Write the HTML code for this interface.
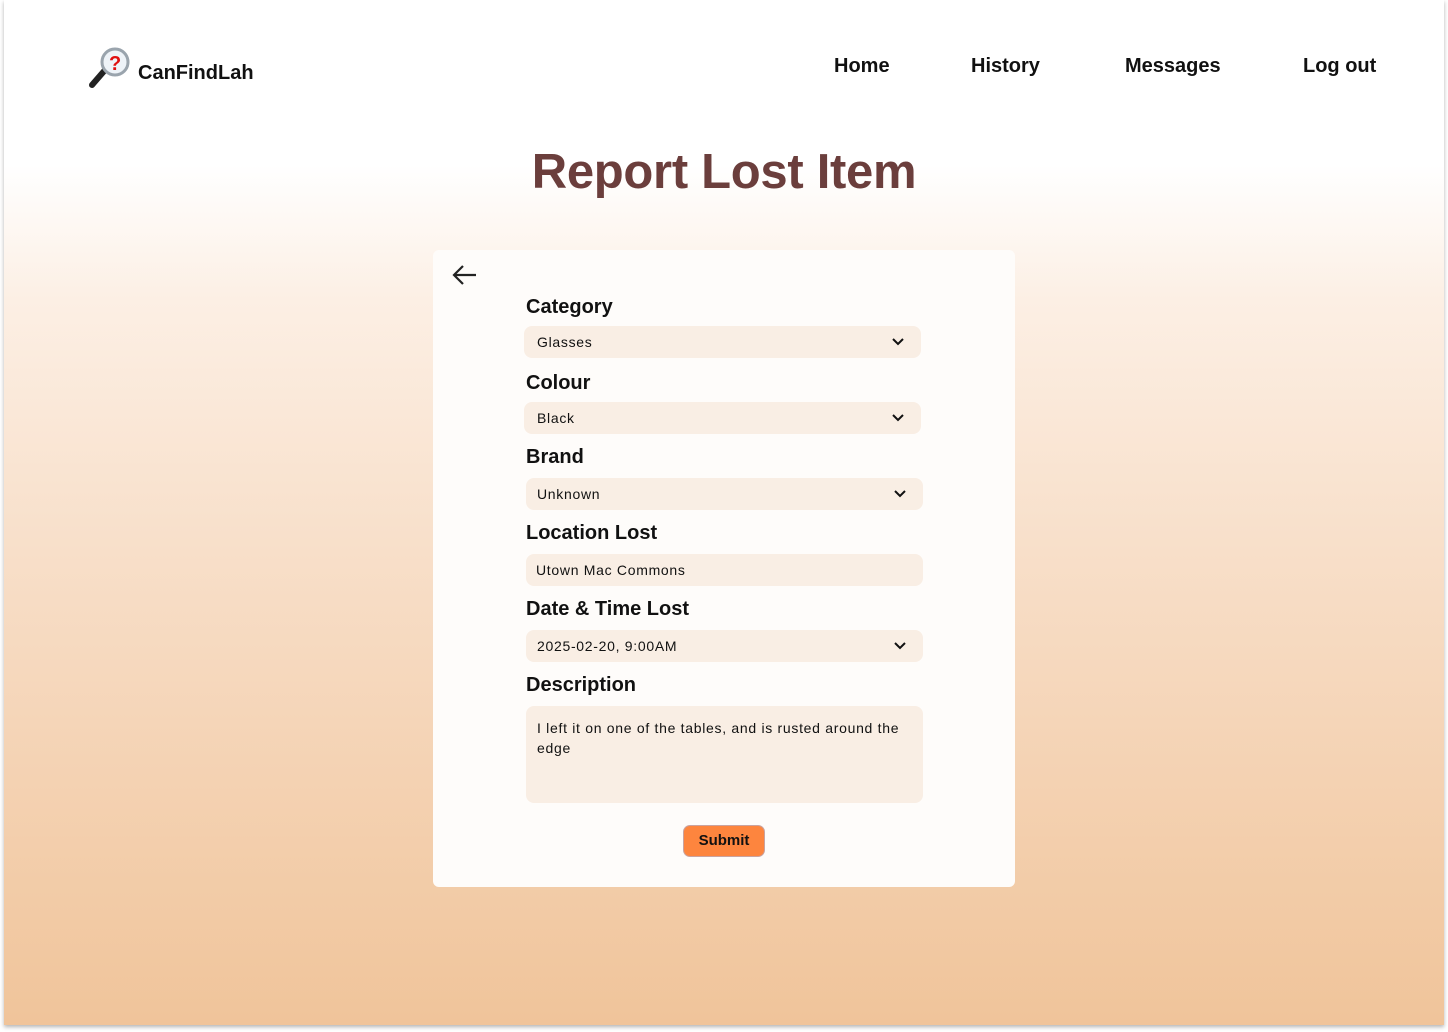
<!DOCTYPE html>
<html><head><style>
*{margin:0;padding:0;box-sizing:border-box}
body{width:1448px;height:1032px;background:#fff;position:relative;overflow:hidden;font-family:"Liberation Sans",sans-serif}
.frame{position:absolute;left:4px;top:0;width:1440px;height:1025px;background:linear-gradient(180deg,#fff 0px,#fff 165px,#fcefe4 300px,#f7dcc4 600px,#f0c49a 1025px);box-shadow:0 2px 4px rgba(0,0,0,.3)}
.nav{position:absolute;top:55px;font-size:20px;font-weight:bold;color:#111}
.logo{position:absolute;left:138px;top:62px;font-size:20px;font-weight:bold;color:#111}
h1{position:absolute;left:0;width:1448px;text-align:center;top:144px;font-size:49px;letter-spacing:-0.3px;color:#6b3e3c;font-weight:bold}
.card{position:absolute;left:433px;top:250px;width:582px;height:637px;background:#fefcfa;border-radius:6px}
.lbl{position:absolute;left:526px;font-size:20px;font-weight:bold;color:#111}
.fld{position:absolute;left:524px;width:397px;height:32px;background:#f9eee4;border-radius:8px;font-size:14px;color:#111;padding-left:13px;line-height:32px;letter-spacing:.7px}
.fld svg{position:absolute;right:16px;top:11px}
.btn{position:absolute;left:683px;top:825px;width:82px;height:32px;background:#fd853e;border:1px solid #c9a3a0;border-radius:7px;text-align:center;line-height:30px;font-size:15px;font-weight:bold;color:#111}
</style></head><body>
<div class="frame"></div>
<svg style="position:absolute;left:87px;top:46px" width="44" height="44" viewBox="0 0 44 44">
<line x1="18" y1="24" x2="5" y2="39" stroke="#222" stroke-width="6" stroke-linecap="round"/>
<circle cx="28" cy="16" r="13" fill="#eef3f8" stroke="#9aa4ad" stroke-width="3"/>
<text x="22" y="24" font-size="20" font-weight="bold" fill="#e01010" font-family="Liberation Sans">?</text>
</svg>
<div class="logo">CanFindLah</div>
<div class="nav" style="left:834px">Home</div>
<div class="nav" style="left:971px">History</div>
<div class="nav" style="left:1125px">Messages</div>
<div class="nav" style="left:1303px">Log out</div>
<h1>Report Lost Item</h1>
<div class="card"></div>
<svg style="position:absolute;left:451px;top:263px" width="28" height="24" viewBox="0 0 28 24"><path d="M25 12H3M12 3L3 12l9 9" stroke="#222" stroke-width="2.2" fill="none"/></svg>
<div class="lbl" style="top:296px">Category</div>
<div class="fld" style="top:326px">Glasses<svg width="14" height="9" viewBox="0 0 14 9"><path d="M2 2l5 5 5-5" stroke="#111" stroke-width="2" fill="none"/></svg></div>
<div class="lbl" style="top:372px">Colour</div>
<div class="fld" style="top:402px">Black<svg width="14" height="9" viewBox="0 0 14 9"><path d="M2 2l5 5 5-5" stroke="#111" stroke-width="2" fill="none"/></svg></div>
<div class="lbl" style="top:446px">Brand</div>
<div class="fld" style="top:478px;left:526px;padding-left:11px">Unknown<svg width="14" height="9" viewBox="0 0 14 9"><path d="M2 2l5 5 5-5" stroke="#111" stroke-width="2" fill="none"/></svg></div>
<div class="lbl" style="top:522px">Location Lost</div>
<div class="fld" style="top:554px;left:526px;padding-left:10px">Utown Mac Commons</div>
<div class="lbl" style="top:598px">Date &amp; Time Lost</div>
<div class="fld" style="top:630px;left:526px;padding-left:11px">2025-02-20, 9:00AM<svg width="14" height="9" viewBox="0 0 14 9"><path d="M2 2l5 5 5-5" stroke="#111" stroke-width="2" fill="none"/></svg></div>
<div class="lbl" style="top:674px">Description</div>
<div class="fld" style="top:706px;left:526px;height:97px;line-height:20px;padding:12px 14px 0 11px">I left it on one of the tables, and is rusted around the edge</div>
<div class="btn">Submit</div>
</body></html>
